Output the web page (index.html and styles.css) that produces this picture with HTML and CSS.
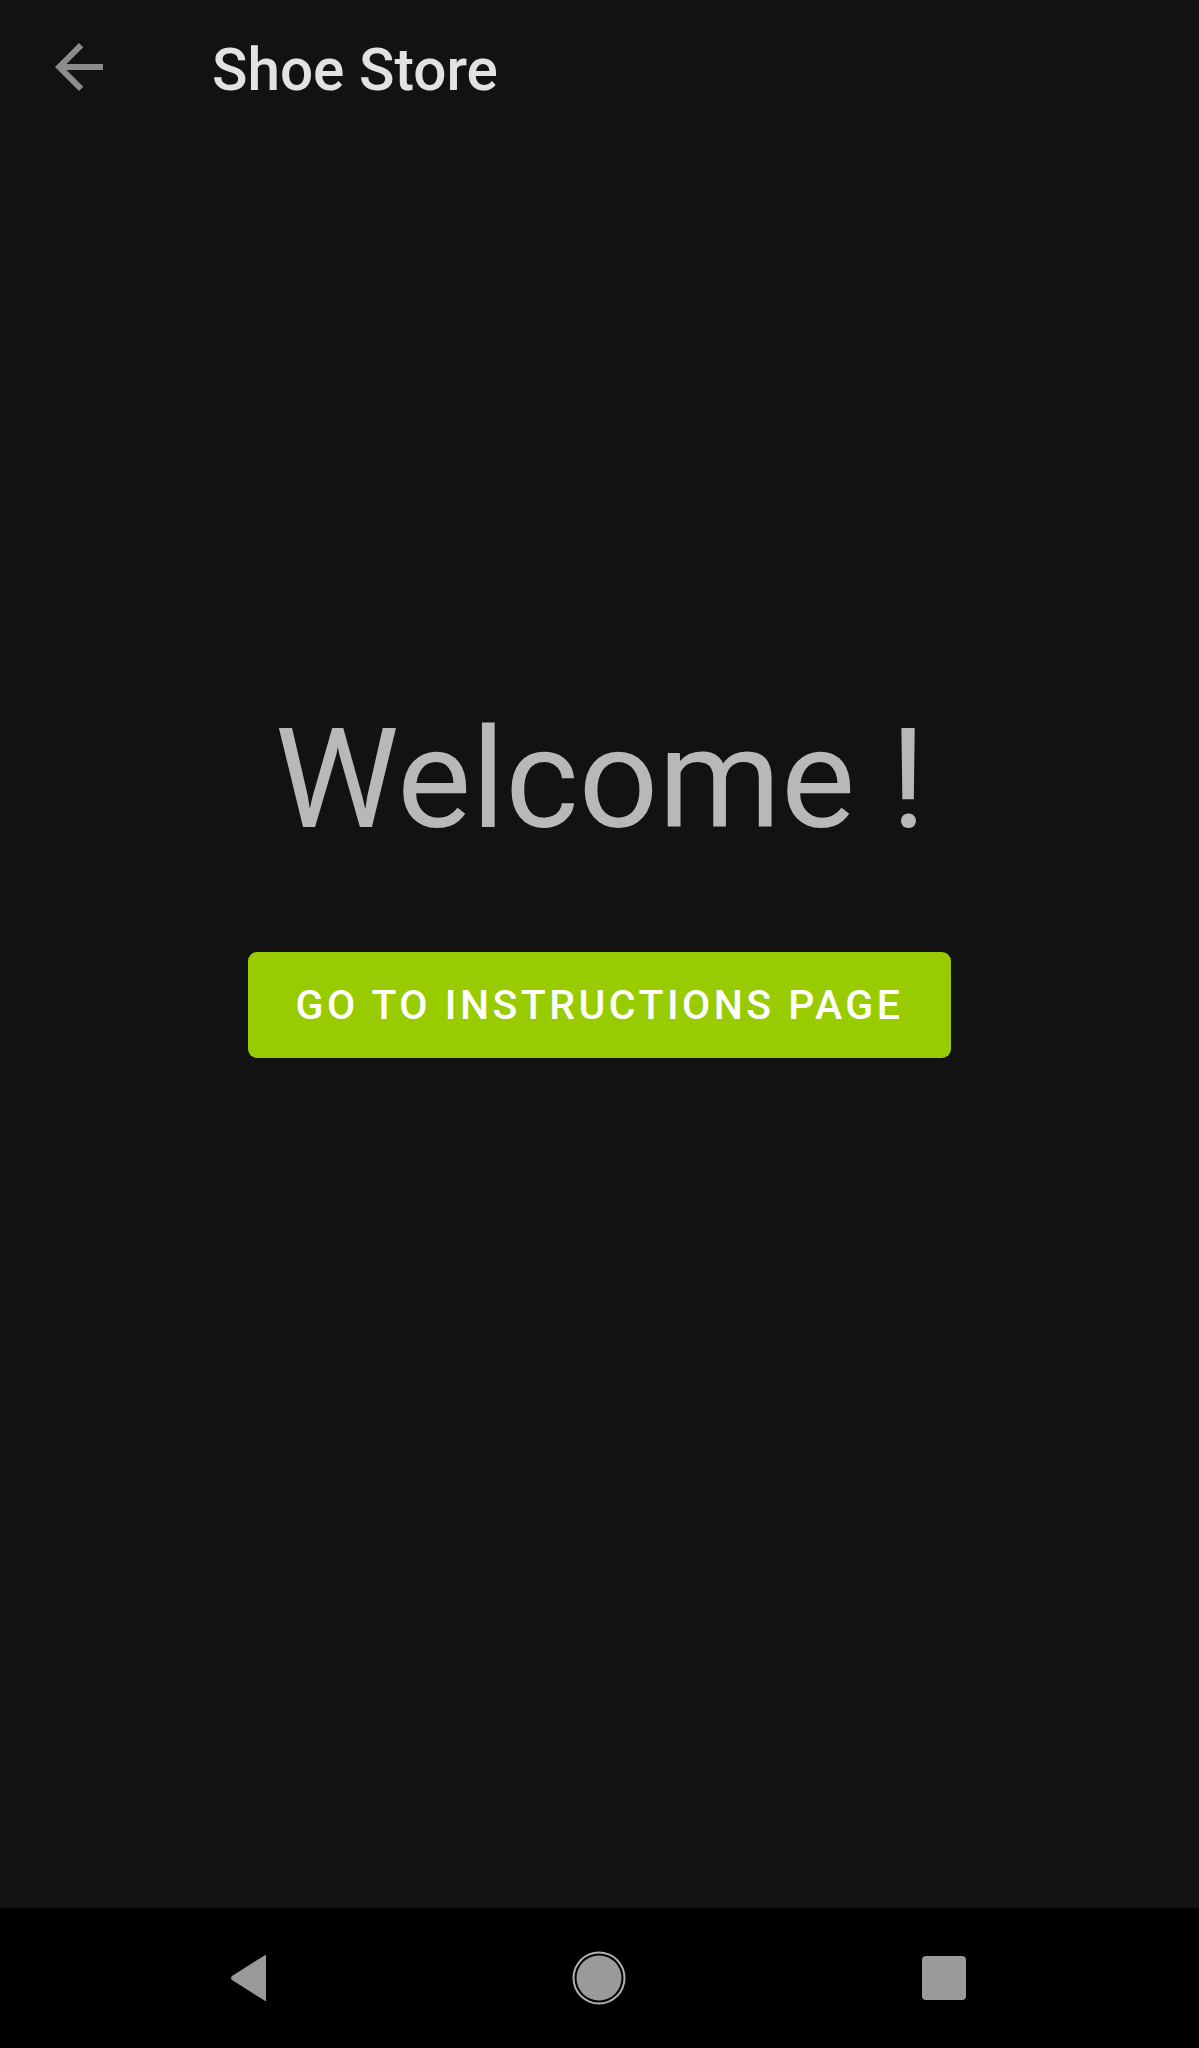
FILE: index.html
```html
<!DOCTYPE html>
<html lang="en">
<head>
<meta charset="utf-8">
<title>Shoe Store</title>
<link rel="stylesheet" href="styles.css">
</head>
<body>
<div class="screen">
  <header class="toolbar">
    <svg class="back" viewBox="0 0 24 24" width="72" height="72" aria-hidden="true">
      <path d="M20 11H7.83l5.59-5.59L12 4l-8 8 8 8 1.41-1.41L7.83 13H20v-2z" fill="currentColor"/>
    </svg>
    <h1 class="title">Shoe Store</h1>
  </header>
  <main class="content">
    <div class="welcome">Welcome !</div>
    <button class="cta">GO TO INSTRUCTIONS PAGE</button>
  </main>
  <nav class="navbar">
    <svg class="nav-icon" width="48" height="52" viewBox="0 0 48 52" aria-hidden="true">
      <path d="M41 4 Q41 2 39.5 3.5 L7 24 Q5 26 7 28 L39.5 48.5 Q41 50 41 48 Z" fill="#9a9a9a"/>
    </svg>
    <svg class="nav-icon home" width="56" height="56" viewBox="0 0 56 56" aria-hidden="true">
      <circle cx="28" cy="28" r="26.5" fill="#b0b0b0"/>
      <circle cx="28" cy="28" r="24.5" fill="#000"/>
      <circle cx="28" cy="28" r="22.5" fill="#9a9a9a"/>
    </svg>
    <svg class="nav-icon" width="48" height="48" viewBox="0 0 48 48" aria-hidden="true">
      <rect x="2" y="2" width="44" height="44" rx="4" fill="#9a9a9a"/>
    </svg>
  </nav>
</div>
</body>
</html>
```

FILE: styles.css
```css
html, body {
  margin: 0;
  padding: 0;
  background: #121212;
}

.screen {
  width: 1199px;
  height: 2048px;
  display: flex;
  flex-direction: column;
  font-family: Roboto, "Liberation Sans", sans-serif;
  overflow: hidden;
}

.toolbar {
  height: 140px;
  display: flex;
  align-items: flex-start;
  padding-left: 43px;
  box-sizing: border-box;
}

.back {
  color: #8c8c8c;
  margin-top: 31px;
  flex: none;
}

.title {
  margin: 0 0 0 97px;
  font-size: 58.5px;
  font-weight: 500;
  color: #e2e2e2;
  line-height: 61px;
  padding-top: 40px;
  letter-spacing: 0;
}

.content {
  flex: 1;
  display: flex;
  flex-direction: column;
  align-items: center;
  padding-top: 569px;
  box-sizing: border-box;
}

.welcome {
  font-size: 140px;
  line-height: 140px;
  color: #b8b8b8;
  font-weight: 400;
  margin-left: 2px;
}

.cta {
  margin-top: 103px;
  width: 703px;
  height: 106px;
  border: none;
  border-radius: 9px;
  background: #99cc00;
  color: #ffffff;
  font-family: Roboto, "Liberation Sans", sans-serif;
  font-weight: 500;
  font-size: 41px;
  letter-spacing: 0.085em;
  padding: 0;
}

.navbar {
  height: 140px;
  background: #000;
  display: flex;
  align-items: center;
  justify-content: space-between;
  padding: 0 231px 0 225px;
  box-sizing: border-box;
  flex: none;
}

.nav-icon {
  display: block;
}

.home {
  margin-left: 4px;
}
```
